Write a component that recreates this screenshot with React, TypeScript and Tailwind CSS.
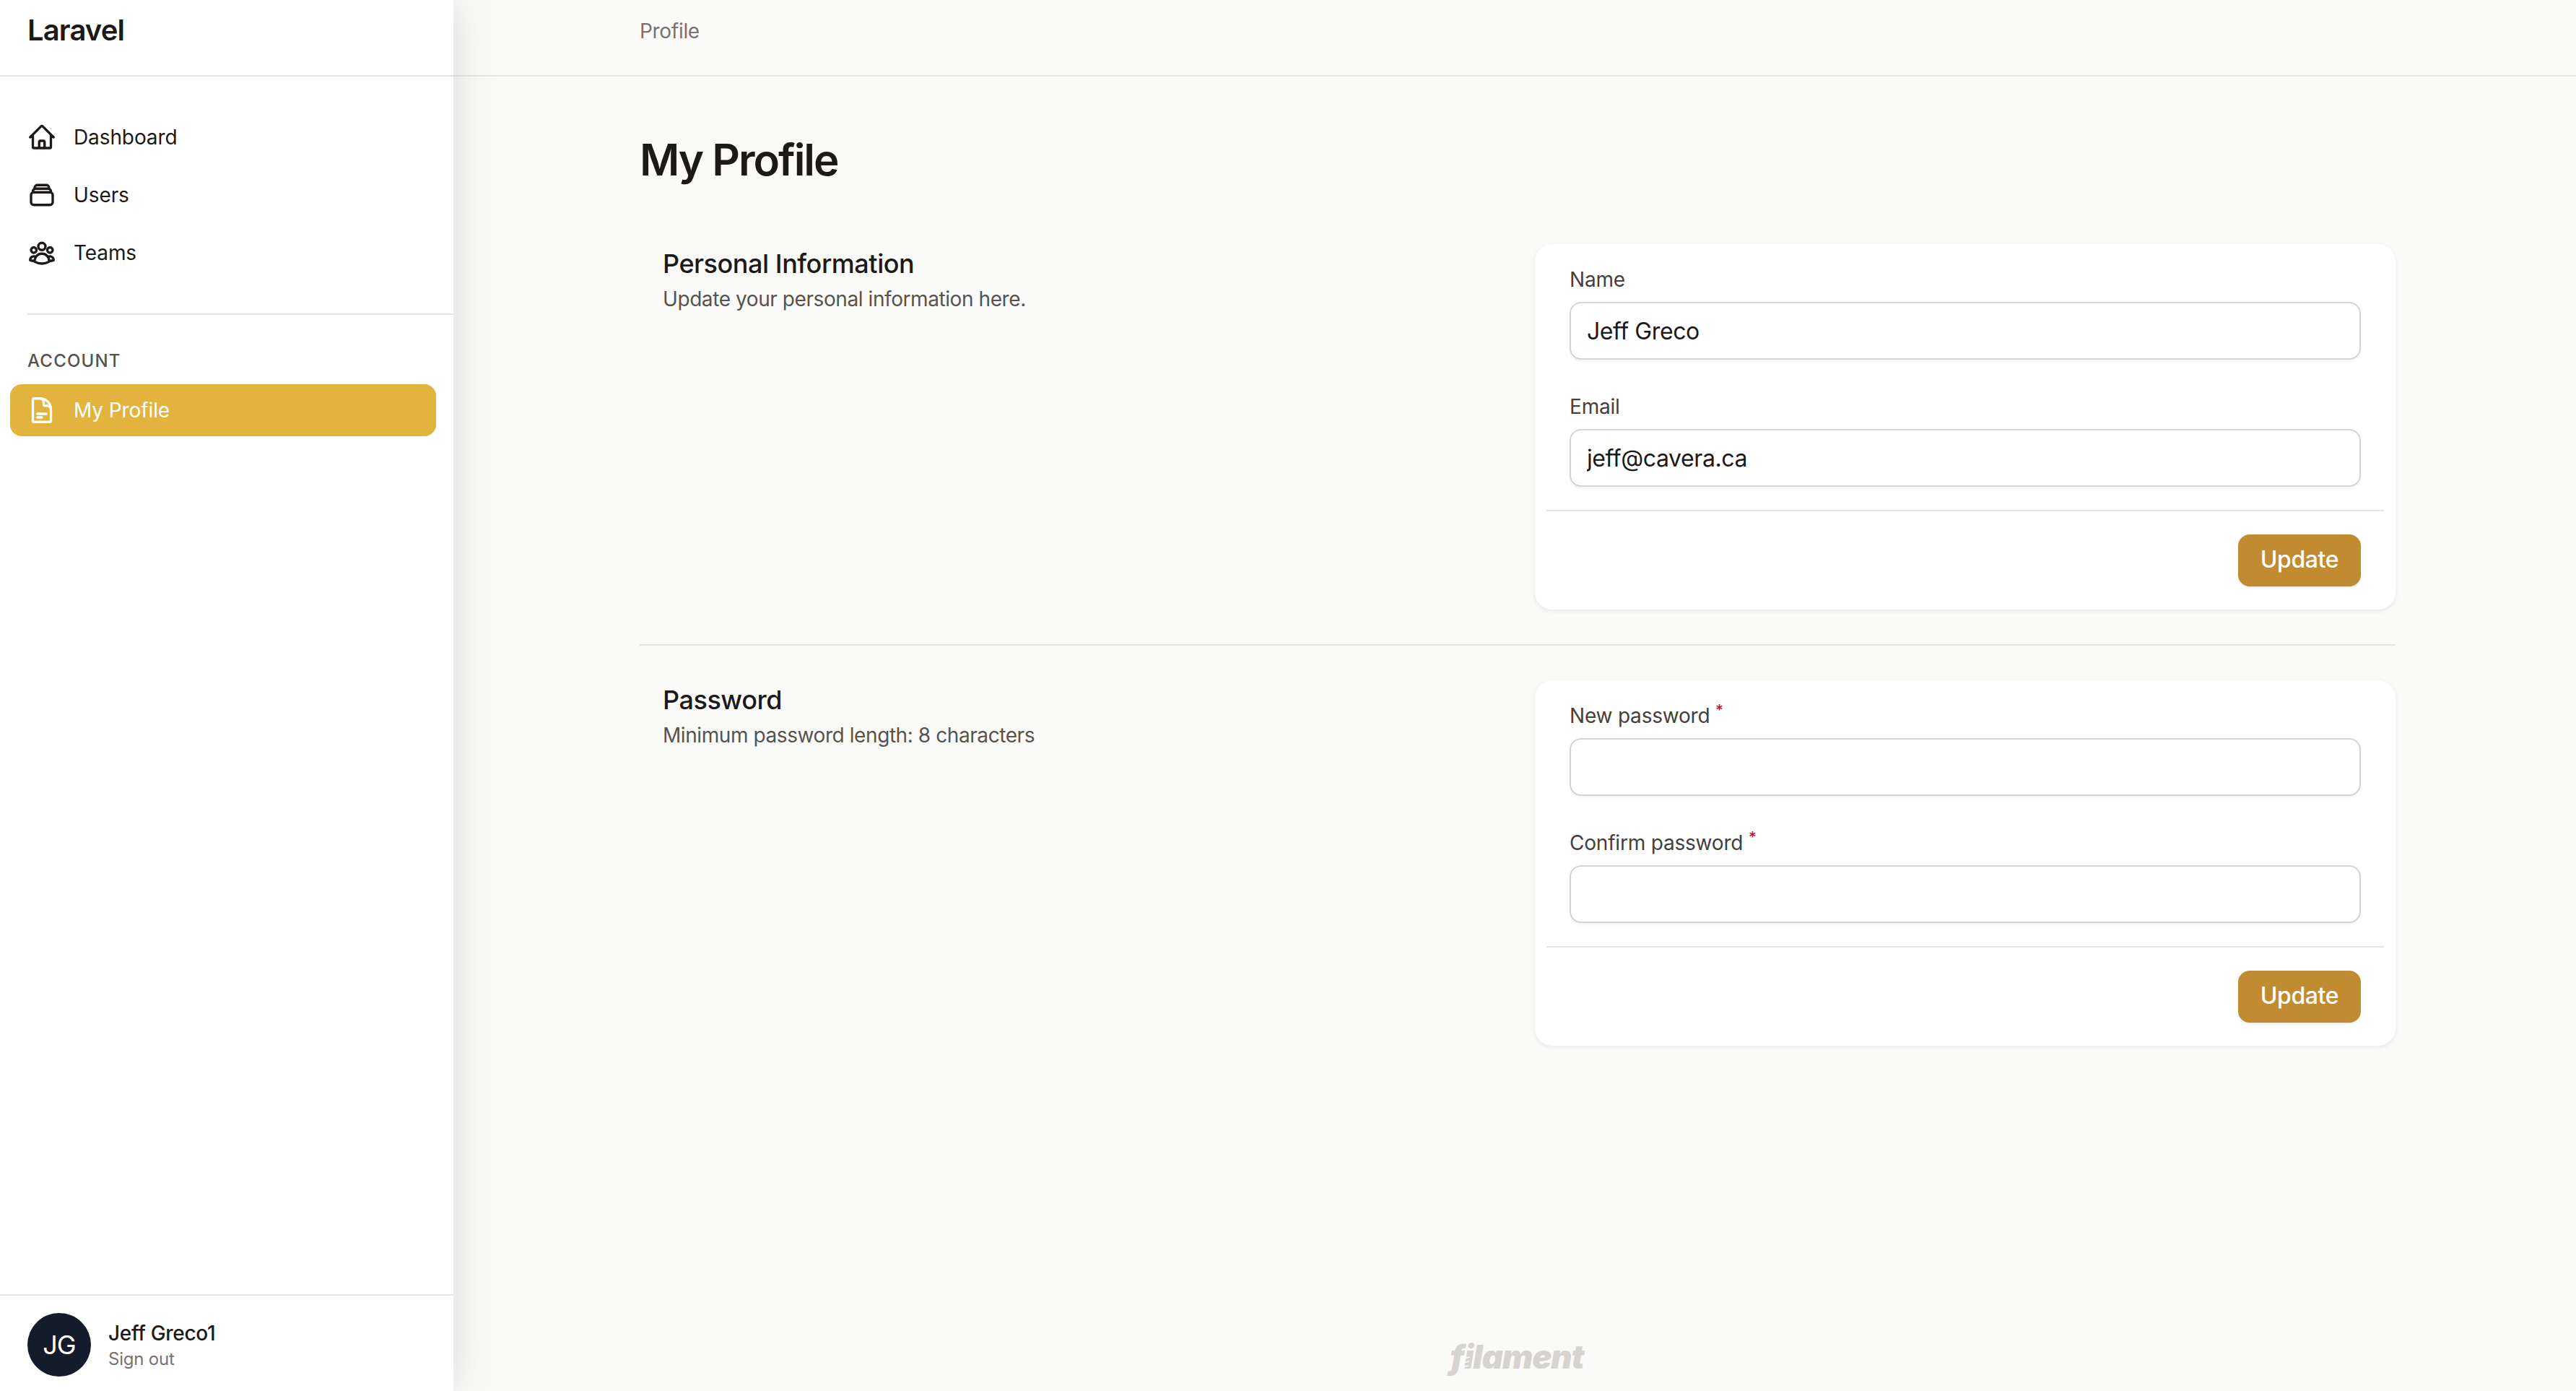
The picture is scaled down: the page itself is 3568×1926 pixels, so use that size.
import type { ReactNode } from "react";
import {
  HiOutlineDocumentText,
  HiOutlineHome,
  HiOutlineRectangleStack,
  HiOutlineUserGroup,
} from "react-icons/hi2";

const font = "font-['Inter','Liberation_Sans',sans-serif]";

function NavItem({ icon, label, active }: { icon: ReactNode; label: string; active?: boolean }) {
  return (
    <a
      className={
        active
          ? "flex h-[72px] items-center gap-6 rounded-2xl bg-[#e2b43e] pl-6 text-[28px] text-white"
          : "flex h-[72px] items-center gap-6 rounded-2xl pl-6 text-[28px] text-[#1c1917]"
      }
    >
      {icon}
      <span className="tracking-[-0.1px]">{label}</span>
    </a>
  );
}

function Field({ label, value, required }: { label: string; value?: string; required?: boolean }) {
  return (
    <div>
      <label className="block h-10 text-[28px] leading-[34px] tracking-[-0.2px] text-[#44403c]">
        {label}
        {required && (
          <>
            {" "}
            <sup className="font-medium text-[#be123c]">*</sup>
          </>
        )}
      </label>
      <input
        defaultValue={value}
        className="mt-2 block h-20 w-full rounded-2xl border-2 border-[#d4d4d4] bg-white px-[22px] text-[32px] tracking-[-0.4px] text-[#1c1917] shadow-[0_2px_3px_rgba(0,0,0,0.05)] outline-none"
      />
    </div>
  );
}

function Section({
  title,
  description,
  children,
}: {
  title: string;
  description: string;
  children: ReactNode;
}) {
  return (
    <section className="grid grid-cols-2 gap-12">
      <div className="pl-8">
        <h2 className="text-[36px] leading-[54px] font-medium tracking-[-0.45px] text-[#1c1917]">{title}</h2>
        <p className="mt-0.5 text-[28px] leading-10 tracking-[-0.42px] text-[#57534e]">{description}</p>
      </div>
      <div className="rounded-3xl bg-white shadow-[0_2px_6px_rgba(0,0,0,0.08)]">
        <div className="flex flex-col gap-12 px-12 pt-8">{children}</div>
        <div className="mx-4 mt-8 h-0.5 bg-[#e7e5e4]" />
        <div className="flex justify-end px-12 py-8">
          <button
            type="button"
            className="h-[72px] w-[170px] rounded-2xl bg-[#c18c31] pb-0.5 text-[32px] font-medium tracking-[-0.4px] text-white shadow-[0_2px_3px_rgba(0,0,0,0.08)]"
          >
            Update
          </button>
        </div>
      </div>
    </section>
  );
}

export default function App() {
  return (
    <div className={`flex h-[1926px] overflow-hidden bg-[#fafaf9] ${font}`}>
      <aside className="relative z-10 flex w-[628px] shrink-0 flex-col bg-white shadow-[0_0_60px_rgba(0,0,0,0.13)]">
        <div className="h-[106px] shrink-0 border-b-2 border-[#e7e5e4] pt-[14px] pl-[38px] text-[40px] leading-14 font-semibold tracking-[-0.9px] text-[#1c1917]">
          Laravel
        </div>

        <nav className="flex-1 pt-12 pr-6 pl-[14px]">
          <div className="flex flex-col gap-2">
            <NavItem icon={<HiOutlineHome className="size-10" strokeWidth={2} />} label="Dashboard" />
            <NavItem icon={<HiOutlineRectangleStack className="size-10" strokeWidth={2} />} label="Users" />
            <NavItem icon={<HiOutlineUserGroup className="size-10" strokeWidth={2} />} label="Teams" />
          </div>
          <div className="mt-12 mr-[-24px] ml-6 h-0.5 bg-[#e7e5e4]" />
          <div className="mt-12 mb-4 pl-6 text-[24px] leading-8 font-medium tracking-[1.2px] text-[#57534e] uppercase">
            Account
          </div>
          <NavItem icon={<HiOutlineDocumentText className="size-10" strokeWidth={2} />} label="My Profile" active />
        </nav>

        <div className="flex h-[134px] shrink-0 items-start gap-6 border-t-2 border-[#e7e5e4] pt-6 pl-[38px]">
          <div className="flex size-[88px] items-center justify-center rounded-full bg-[#141b2b] text-[36px] tracking-[-1px] text-white">
            JG
          </div>
          <div className="pt-2">
            <div className="text-[28px] leading-10 font-medium tracking-[-0.3px] text-[#1c1917]">Jeff Greco1</div>
            <div className="text-[24px] leading-8 tracking-[-0.2px] text-[#78716c]">Sign out</div>
          </div>
        </div>
      </aside>

      <main className="flex min-w-0 flex-1 flex-col">
        <header className="h-[106px] shrink-0 border-b-2 border-[#e7e5e4] pt-[23px] pl-[258px] text-[28px] leading-10 tracking-[-0.3px] text-[#78716c]">
          Profile
        </header>

        <div className="flex-1 pt-20 pr-[250px] pl-[258px]">
          <h1 className="mb-20 text-[60px] leading-[70px] font-semibold tracking-[-2px] text-[#1c1917]">My Profile</h1>
          <div className="h-0.5" />

          <Section title="Personal Information" description="Update your personal information here.">
            <Field label="Name" value="Jeff Greco" />
            <Field label="Email" value="jeff@cavera.ca" />
          </Section>

          <div className="my-12 h-0.5 bg-[#e7e5e4]" />

          <Section title="Password" description="Minimum password length: 8 characters">
            <Field label="New password" required />
            <Field label="Confirm password" required />
          </Section>
        </div>

        <div className="flex h-[75px] shrink-0 justify-center pl-[6px]">
          <span className="relative text-[45px] leading-[56px] font-black tracking-[-1px] text-[#d6d3d1] italic">
            filament
            {/* the coil in the i of the logo */}
            <svg viewBox="0 0 12 22" className="absolute top-[26px] left-[17px] h-[22px] w-3" fill="none" stroke="#fafaf9" strokeWidth="1.6">
              <path d="M1 4 L10 2 M0 10 L9 8 M-1 16 L8 14" />
            </svg>
          </span>
        </div>
      </main>
    </div>
  );
}
